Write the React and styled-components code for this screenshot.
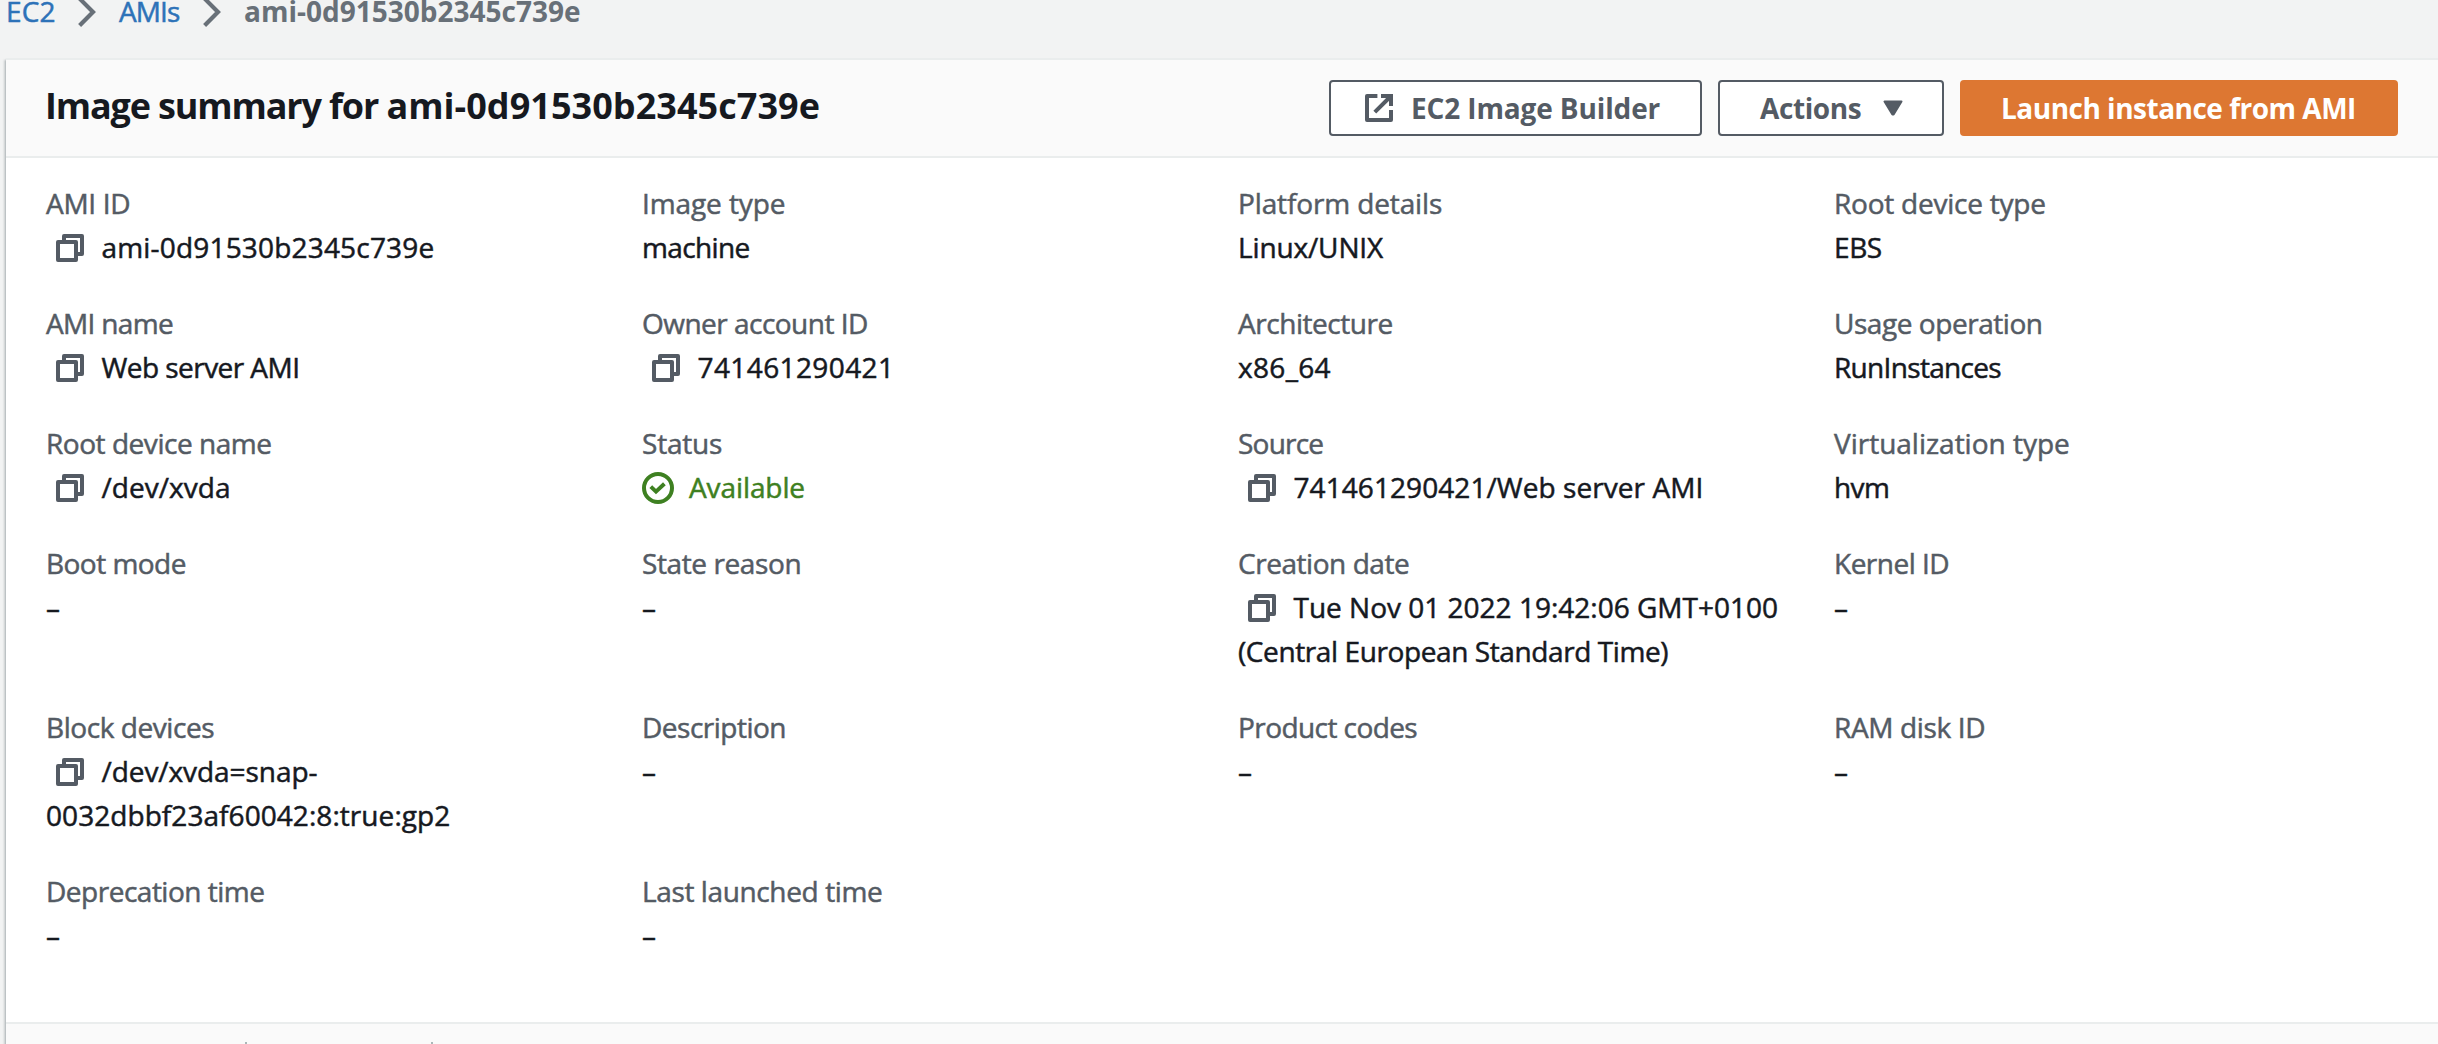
import React from "react";
import styled, { createGlobalStyle } from "styled-components";

const colors = {
  page: "#f2f3f3",
  header: "#fafafa",
  divider: "#eaeded",
  text: "#16191f",
  label: "#545b64",
  muted: "#687078",
  link: "#2d72b8",
  success: "#3e8021",
  primary: "#dd7732",
};

const GlobalStyle = createGlobalStyle`
  * { box-sizing: border-box; }
  body {
    margin: 0;
    background: ${colors.page};
    color: ${colors.text};
    font-family: "Open Sans", "Noto Sans", sans-serif;
    font-size: 28px;
    line-height: 44px;
  }
`;

const Page = styled.div`
  display: flex;
  flex-direction: column;
  height: 1044px;
  overflow: hidden;
`;

const Text = styled.span`
  letter-spacing: ${(p) => p.$track || 0}px;
  white-space: pre;
  -webkit-text-stroke: ${(p) => (p.$thin ? 0 : 0.5)}px currentColor;
`;

const Breadcrumbs = styled.nav`
  display: flex;
  flex: none;
  align-items: center;
  height: 44px;
  margin: -11px 0 25px;
  padding-left: 6px;
`;

const Crumb = styled.a`
  color: ${colors.link};
  width: ${(p) => p.$width}px;
`;

const CurrentCrumb = styled.span`
  color: ${colors.muted};
  font-weight: 700;
`;

const ChevronSvg = styled.svg`
  flex: none;
  margin: 2px 23px 0 0;
`;

const Panel = styled.section`
  flex: 1;
  display: flex;
  flex-direction: column;
  margin-left: 6px;
  background: #fff;
  border-top: 2px solid ${colors.divider};
  box-shadow: 0 2px 2px 0 rgba(0, 28, 36, 0.3), -2px 2px 2px 0 rgba(0, 28, 36, 0.15);
`;

const PanelHeader = styled.header`
  display: flex;
  flex: none;
  align-items: center;
  justify-content: space-between;
  height: 98px;
  padding: 0 40px 0 39px;
  background: ${colors.header};
  border-bottom: 2px solid ${colors.divider};
`;

const Title = styled.h1`
  margin: 0;
  padding-bottom: 4px;
  font-size: 36px;
  font-weight: 700;
`;

const Actions = styled.div`
  display: flex;
  gap: 16px;
`;

const Button = styled.button`
  display: flex;
  align-items: center;
  gap: ${(p) => p.$gap || 0}px;
  width: ${(p) => p.$width}px;
  height: 56px;
  padding: 0 0 0 ${(p) => p.$inset}px;
  font: inherit;
  font-weight: 700;
  color: ${(p) => (p.$primary ? "#fff" : colors.label)};
  background: ${(p) => (p.$primary ? colors.primary : "#fff")};
  border: 2px solid ${(p) => (p.$primary ? colors.primary : colors.label)};
  border-radius: 4px;
`;

const Details = styled.dl`
  flex: none;
  display: grid;
  grid-template-columns: repeat(4, 596px);
  row-gap: 32px;
  align-content: start;
  height: 864px;
  margin: 0;
  padding: 23px 0 0 40px;
`;

const Field = styled.div``;

const Label = styled.dt`
  color: ${colors.label};
`;

const Value = styled.dd`
  margin: 0;
`;

const Line = styled.div`
  display: flex;
  align-items: center;
  height: 44px;
  color: ${(p) => (p.$success ? colors.success : "inherit")};
`;

const CopySvg = styled.svg`
  flex: none;
  margin: 1px 17.5px 0 10px;
`;

const StatusSvg = styled.svg`
  flex: none;
  margin: 1px 15px 0 0;
`;

const Tabs = styled.div`
  flex: 1;
  display: flex;
  padding-top: 18px;
  background: ${colors.header};
  border-top: 2px solid ${colors.divider};
`;

const Tab = styled.div`
  width: ${(p) => p.$width}px;
  border-right: 2px solid #aab7b8;
`;

const Chevron = () => (
  <ChevronSvg width="18" height="30" viewBox="0 0 18 30" fill="none" stroke={colors.muted} strokeWidth="4.2">
    <path d="M1.6 1.6 15 15 1.6 28.4" />
  </ChevronSvg>
);

const CopyIcon = () => (
  <CopySvg width="28" height="28" viewBox="0 0 28 28" fill="none" stroke={colors.label} strokeWidth="4" strokeLinejoin="round">
    <path d="M8 6V2h18v18h-4" />
    <path d="M2 8h18v18H2z" />
  </CopySvg>
);

const StatusIcon = () => (
  <StatusSvg width="32" height="32" viewBox="0 0 32 32" fill="none" stroke="currentColor" strokeWidth="4">
    <circle cx="16" cy="16" r="14" />
    <path d="M8.8 14.6 14 19.6 22.4 11.8" />
  </StatusSvg>
);

const ExternalIcon = () => (
  <svg width="28" height="28" viewBox="0 0 28 28" fill="none" stroke="currentColor" strokeWidth="4">
    <path d="M12.4 2H2v24h24V16" strokeLinejoin="round" />
    <path d="M16 2h10v10M9.8 18.2 25 3" />
  </svg>
);

const CaretIcon = () => (
  <svg width="20" height="16" viewBox="0 0 20 16">
    <path d="M1.5 1.5h17L10.6 14.5H9.4z" fill="currentColor" stroke="currentColor" strokeWidth="2" strokeLinejoin="round" />
  </svg>
);

const dash = { lines: [["–", 0]] };

const fields = [
  { label: ["AMI ID", -0.3], copy: true, lines: [["ami-0d91530b2345c739e", 0.18]] },
  { label: ["Image type", -0.1], lines: [["machine", -0.63]] },
  { label: ["Platform details", -0.13], lines: [["Linux/UNIX", -0.14]] },
  { label: ["Root device type", -0.23], lines: [["EBS", -0.4]] },

  { label: ["AMI name", -0.66], copy: true, lines: [["Web server AMI", -0.55]] },
  { label: ["Owner account ID", -0.52], copy: true, lines: [["741461290421", 0.4]] },
  { label: ["Architecture", -0.45], lines: [["x86_64", 0.33]] },
  { label: ["Usage operation", -0.45], lines: [["RunInstances", -0.68]] },

  { label: ["Root device name", -0.46], copy: true, lines: [["/dev/xvda", 0.05]] },
  { label: ["Status", -0.21], success: true, lines: [["Available", -0.1]] },
  { label: ["Source", -0.78], copy: true, lines: [["741461290421/Web server AMI", 0.07]] },
  { label: ["Virtualization type", -0.01], lines: [["hvm", -0.58]] },

  { label: ["Boot mode", -0.53], ...dash },
  { label: ["State reason", -0.4], ...dash },
  {
    label: ["Creation date", -0.45],
    copy: true,
    lines: [["Tue Nov 01 2022 19:42:06 GMT+0100", 0], ["(Central European Standard Time)", -0.4]],
  },
  { label: ["Kernel ID", -0.5], ...dash },

  {
    label: ["Block devices", -0.43],
    copy: true,
    lines: [["/dev/xvda=snap-", -0.07], ["0032dbbf23af60042:8:true:gp2", 0.06]],
  },
  { label: ["Description", -0.5], ...dash },
  { label: ["Product codes", -0.57], ...dash },
  { label: ["RAM disk ID", -0.35], ...dash },

  { label: ["Deprecation time", -0.49], ...dash },
  { label: ["Last launched time", -0.38], ...dash },
];

function DetailField({ label, lines, copy, success }) {
  return (
    <Field>
      <Label>
        <Line>
          <Text $track={label[1]}>{label[0]}</Text>
        </Line>
      </Label>
      <Value>
        {lines.map(([text, track], i) => (
          <Line key={text} $success={success}>
            {copy && i === 0 && <CopyIcon />}
            {success && <StatusIcon />}
            <Text $track={track}>{text}</Text>
          </Line>
        ))}
      </Value>
    </Field>
  );
}

export default function App() {
  return (
    <Page>
      <GlobalStyle />
      <Breadcrumbs>
        <Crumb $width={72}><Text $track={0.15}>EC2</Text></Crumb>
        <Chevron />
        <Crumb $width={84}><Text $track={-0.9}>AMIs</Text></Crumb>
        <Chevron />
        <CurrentCrumb><Text $thin $track={0}>ami-0d91530b2345c739e</Text></CurrentCrumb>
      </Breadcrumbs>
      <Panel>
        <PanelHeader>
          <Title>
            <Text $thin $track={-1.15}>{"Image summary for "}</Text>
            <Text $thin $track={0.05}>ami-0d91530b2345c739e</Text>
          </Title>
          <Actions>
            <Button $width={373} $inset={34} $gap={18}>
              <ExternalIcon />
              <Text $thin $track={-0.13}>EC2 Image Builder</Text>
            </Button>
            <Button $width={226} $inset={40} $gap={22}>
              <Text $thin $track={-0.4}>Actions</Text>
              <CaretIcon />
            </Button>
            <Button $primary $width={438} $inset={39}>
              <Text $thin $track={-0.5}>Launch instance from AMI</Text>
            </Button>
          </Actions>
        </PanelHeader>
        <Details>
          {fields.map((field) => (
            <DetailField key={field.label[0]} {...field} />
          ))}
        </Details>
        <Tabs>
          <Tab $width={241} />
          <Tab $width={186} />
        </Tabs>
      </Panel>
    </Page>
  );
}
